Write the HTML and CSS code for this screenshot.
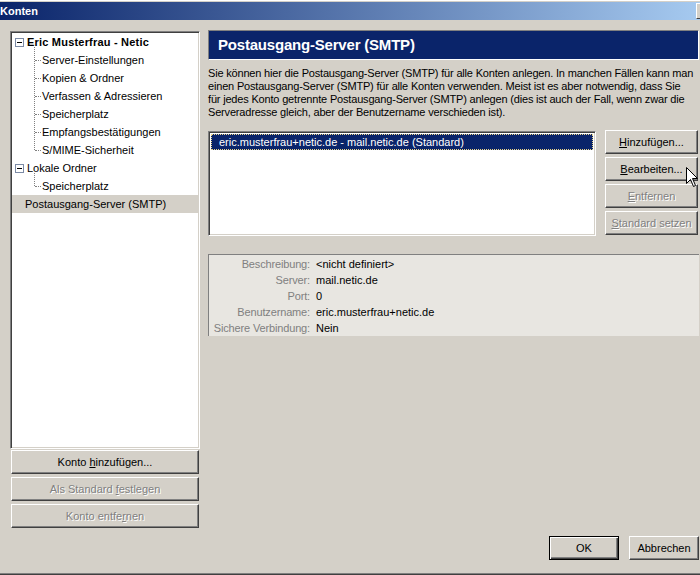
FILE: index.html
```html
<!DOCTYPE html>
<html lang="de">
<head>
  <meta charset="UTF-8">
  <title>Konten</title>
  <link rel="stylesheet" href="styles.css">
</head>
<body>

  <div class="window">
    <div class="titlebar">
      <span class="title">Konten</span>
      <span class="tb-btn"></span>
    </div>

    <div class="main">
      <!-- account tree and its buttons -->
      <div class="sidebar">
        <div class="tree">
          <div class="node parent bold"><span class="expander"></span>Eric Musterfrau - Netic</div>
          <div class="children">
            <div class="node child">Server-Einstellungen</div>
            <div class="node child">Kopien &amp; Ordner</div>
            <div class="node child">Verfassen &amp; Adressieren</div>
            <div class="node child">Speicherplatz</div>
            <div class="node child">Empfangsbestätigungen</div>
            <div class="node child">S/MIME-Sicherheit</div>
          </div>
          <div class="node parent"><span class="expander"></span>Lokale Ordner</div>
          <div class="children">
            <div class="node child">Speicherplatz</div>
          </div>
          <div class="node parent selected">Postausgang-Server (SMTP)</div>
        </div>
        <div class="side-buttons">
          <button class="btn">Konto <u>h</u>inzufügen...</button>
          <button class="btn" disabled>Als Standard <u>f</u>estlegen</button>
          <button class="btn" disabled>Konto entfe<u>r</u>nen</button>
        </div>
      </div>

      <!-- SMTP page -->
      <div class="content">
        <div class="header">Postausgang-Server (SMTP)</div>
        <p class="intro">Sie können hier die Postausgang-Server (SMTP) für alle Konten anlegen. In manchen Fällen kann man<br>einen Postausgang-Server (SMTP) für alle Konten verwenden. Meist ist es aber notwendig, dass Sie<br>für jedes Konto getrennte Postausgang-Server (SMTP) anlegen (dies ist auch der Fall, wenn zwar die<br>Serveradresse gleich, aber der Benutzername verschieden ist).</p>

        <div class="server-area">
          <div class="server-list">
            <div class="server-row selected">eric.musterfrau+netic.de - mail.netic.de (Standard)</div>
          </div>
          <div class="server-buttons">
            <button class="btn"><u>H</u>inzufügen...</button>
            <button class="btn"><u>B</u>earbeiten...</button>
            <button class="btn" disabled><u>E</u>ntfernen</button>
            <button class="btn" disabled><u>S</u>tandard setzen</button>
          </div>
        </div>

        <div class="details">
          <span class="label">Beschreibung:</span><span class="value">&lt;nicht definiert&gt;</span>
          <span class="label">Server:</span><span class="value">mail.netic.de</span>
          <span class="label">Port:</span><span class="value">0</span>
          <span class="label">Benutzername:</span><span class="value">eric.musterfrau+netic.de</span>
          <span class="label">Sichere Verbindung:</span><span class="value">Nein</span>
        </div>

        <div class="footer">
          <button class="btn default">OK</button>
          <button class="btn">Abbrechen</button>
        </div>
      </div>
    </div>

    <svg class="cursor" width="13" height="21" viewBox="0 0 13 21">
      <path d="M0.5 0.5 L0.5 16.5 L4.5 12.5 L7.5 19.5 L9.5 18.5 L6.5 11.5 L11.5 11.5 Z" fill="#fff" stroke="#000" stroke-width="1"/>
    </svg>
  </div>

</body>
</html>
```

FILE: styles.css
```css
body {
  margin: 0;
  background-color: #d4d0c8;
  font-family: "Liberation Sans", Arial, sans-serif;
  font-size: 11px;
  color: #000;
}
.window {
  position: relative;
  width: 700px;
  height: 575px;
  box-sizing: border-box;
  padding-top: 2px;
  overflow: hidden;
  background-color: #d4d0c8;
  border-top: 1px solid #fff;
  border-bottom: 1px solid #404040;
  box-shadow: inset 0 -1px #808080;
}
.titlebar {
  display: flex;
  align-items: center;
  height: 18px;
  margin-top: -1px;
  background: linear-gradient(to right, #0a246a, #a6caf0);
}
.title {
  color: #fff;
  font-weight: bold;
  padding-left: 0;
}
.tb-btn {
  margin-left: auto;
  width: 3px;
  height: 14px;
  background-color: #d4d0c8;
  border-top: 1px solid #fff;
  border-left: 1px solid #fff;
  border-bottom: 1px solid #404040;
}
.main {
  display: flex;
  padding: 10px 0 0 10px;
}

/* left side */
.sidebar {
  width: 190px;
  margin-top: 1px;
  display: flex;
  flex-direction: column;
}
.tree {
  height: 418px;
  box-sizing: border-box;
  background-color: #fff;
  border: 1px solid;
  border-color: #808080 #fff #fff #808080;
  box-shadow: inset 1px 1px #404040, inset -1px -1px #d4d0c8;
  padding: 1px 1px 0 1px;
}
.node {
  height: 18px;
  line-height: 18px;
  white-space: nowrap;
}
.parent {
  display: flex;
  align-items: center;
  padding-left: 3px;
}
.bold {
  font-weight: bold;
  letter-spacing: 0.2px;
}
.expander {
  position: relative;
  width: 7px;
  height: 7px;
  border: 1px solid #7b8aa5;
  background-color: #fff;
  margin-right: 3px;
}
.expander::after {
  content: "";
  position: absolute;
  left: 1px;
  top: 3px;
  width: 5px;
  height: 1px;
  background-color: #000;
}
.parent.selected {
  background-color: #d4d0c8;
  padding-left: 13px;
}
.children {
  position: relative;
}
.children::before {
  content: "";
  position: absolute;
  left: 22px;
  top: -4px;
  bottom: 9px;
  border-left: 1px dotted #808080;
}
.child {
  display: flex;
  align-items: center;
  padding-left: 23px;
}
.child::before {
  content: "";
  width: 6px;
  border-top: 1px dotted #808080;
  margin-right: 1px;
}
.side-buttons {
  display: flex;
  flex-direction: column;
  gap: 3px;
  margin-top: 1px;
  padding-left: 1px;
}
.side-buttons .btn {
  width: 188px;
}

/* buttons */
.btn {
  height: 24px;
  box-sizing: border-box;
  padding: 0;
  font-family: inherit;
  font-size: 11px;
  color: #000;
  background-color: #d4d0c8;
  border: 1px solid;
  border-color: #fff #404040 #404040 #fff;
  box-shadow: inset -1px -1px #808080;
  border-radius: 0;
}
.btn:disabled {
  color: #808080;
  text-shadow: 1px 1px #fff;
}
.btn.default {
  border: 1px solid #000;
  box-shadow: inset 1px 1px #fff, inset -1px -1px #404040, inset -2px -2px #808080;
}

/* right side */
.content {
  width: 491px;
  height: 530px;
  margin-left: 8px;
  display: flex;
  flex-direction: column;
}
.header {
  height: 30px;
  box-sizing: border-box;
  border: 1px solid;
  border-color: #808080 #fff #fff #808080;
  background-color: #0a246a;
  color: #fff;
  font-size: 15px;
  font-weight: bold;
  letter-spacing: -0.2px;
  line-height: 28px;
  padding-left: 9px;
}
.intro {
  margin: 7px 0 0 0;
  line-height: 13px;
  letter-spacing: -0.18px;
  white-space: nowrap;
}
.server-area {
  display: flex;
  gap: 9px;
  margin-top: 11px;
}
.server-list {
  width: 388px;
  height: 105px;
  margin-top: 1px;
  box-sizing: border-box;
  background-color: #fff;
  border: 1px solid;
  border-color: #808080 #fff #fff #808080;
  box-shadow: inset 1px 1px #404040, inset -1px -1px #d4d0c8;
  padding: 2px 2px 0 2px;
}
.server-row {
  height: 16px;
  line-height: 14px;
  box-sizing: border-box;
  padding-left: 7px;
  white-space: nowrap;
}
.server-row.selected {
  background-color: #0a246a;
  color: #fff;
  border: 1px dotted #e9d48a;
}
.server-buttons {
  display: flex;
  flex-direction: column;
  gap: 3px;
}
.server-buttons .btn {
  width: 93px;
}
.details {
  display: grid;
  grid-template-columns: 101px 1fr;
  column-gap: 6px;
  margin-top: 18px;
  height: 82px;
  box-sizing: border-box;
  padding-top: 1px;
  background-color: #e8e6e1;
  border-top: 1px solid #808080;
  border-left: 1px solid #808080;
  align-content: start;
}
.details span {
  height: 16px;
  line-height: 16px;
  white-space: nowrap;
}
.label {
  text-align: right;
  color: #808080;
  letter-spacing: -0.15px;
}
.footer {
  margin-top: auto;
  display: flex;
  justify-content: flex-end;
  gap: 10px;
}
.footer .btn {
  width: 70px;
}
.cursor {
  position: absolute;
  left: 686px;
  top: 166px;
}
```
